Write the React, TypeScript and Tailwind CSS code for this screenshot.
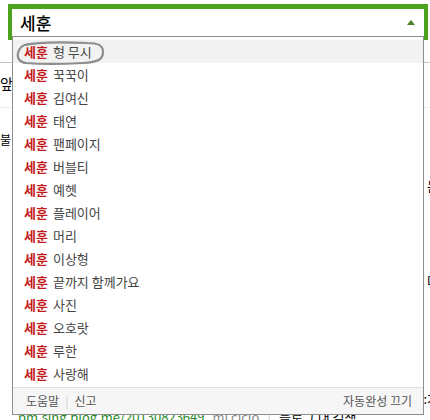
const SUGGESTIONS = [
  "형 무시",
  "꾹꾹이",
  "김여신",
  "태연",
  "팬페이지",
  "버블티",
  "예헷",
  "플레이어",
  "머리",
  "이상형",
  "끝까지 함께가요",
  "사진",
  "오호랏",
  "루한",
  "사랑해",
];

function Scribble() {
  // hand-drawn gray loop around the first suggestion
  return (
    <svg
      className="pointer-events-none absolute left-[2px] top-[4px]"
      width="94"
      height="26"
      viewBox="0 0 94 26"
    >
      <path
        d="M10 4 C22 1 48 1 72 2 C83 2 88 4 88 11 C88 18 84 21 68 22 C48 23 24 23 11 22 C4 21 2 17 3 12 C4 7 7 4 13 3"
        fill="none"
        stroke="#8d8d8d"
        strokeWidth="2.2"
        strokeLinecap="round"
      />
    </svg>
  );
}

export default function App() {
  return (
    <div className="relative h-[420px] w-[430px] overflow-hidden bg-white font-['Noto_Sans_CJK_KR','Noto_Sans',sans-serif] text-[13px] text-[#333]">
      {/* search box */}
      <div className="ml-[8px] mt-[4px] flex h-[36px] w-[420px] items-center justify-between border-x-[4px] border-b-[4px] border-t-[5px] border-[#4ba31d] bg-white pl-[8px] pr-[9px]">
        <span className="text-[17px] font-medium leading-none text-black">세훈</span>
        <svg width="8" height="5" viewBox="0 0 8 5">
          <path d="M0 5 L4 0 L8 5 Z" fill="#4d7d24" />
        </svg>
      </div>

      {/* page behind the dropdown */}
      <div className="mt-[22px] border-t border-[#c4c4c4]" />
      <div className="flex h-[45px] items-start justify-between border-b border-[#ececec] pt-[12px]">
        <span className="text-[14px] leading-4 text-black">앞</span>
      </div>
      <div className="flex h-[40px] items-end justify-between">
        <span className="text-[12px] leading-4 text-black">불</span>
      </div>
      <div className="flex h-[46px] items-end justify-end">
        <span className="mr-[-9px] text-[13px] leading-4 text-black">는</span>
      </div>
      <div className="flex h-[95px] items-end justify-end">
        <span className="mr-[-9px] text-[13px] leading-4 text-black">다</span>
      </div>
      <div className="flex h-[118px] items-end justify-end">
        <span className="mr-[-9px] text-[13px] leading-4 text-black">:가</span>
      </div>
      <div className="flex items-start gap-[8px] pl-[18px] pt-[2px] text-[13px] leading-4">
        <span className="text-[#1f8a1f]">pm.sing.blog.me/20130823649</span>
        <span className="text-[#888]">mi ciclo</span>
        <span className="text-[#ccc]">|</span>
        <span className="text-black">블로그 내 검색</span>
      </div>

      {/* autocomplete layer */}
      <div className="absolute left-[12px] top-[36px] flex h-[379px] w-[412px] flex-col border border-[#8e8e8e] bg-white">
        <ul className="relative flex-1 pt-[3px]">
          {SUGGESTIONS.map((s, i) => (
            <li
              key={s}
              className={
                "flex h-[23px] items-center pl-[11px] leading-none " +
                (i === 0 ? "bg-[#f2f2f2]" : "")
              }
            >
              <b className="font-bold text-[#c41a1a]">세훈</b>
              <span className="ml-[5px] text-[#444]">{s}</span>
            </li>
          ))}
          <Scribble />
        </ul>
        <div className="flex h-[27px] items-center justify-between border-t border-[#dedede] bg-[#f6f6f6] pl-[13px] pr-[11px] text-[12px] text-[#555]">
          <div className="flex items-center gap-[6px]">
            <span>도움말</span>
            <span className="text-[#d0d0d0]">|</span>
            <span>신고</span>
          </div>
          <span>자동완성 끄기</span>
        </div>
      </div>
    </div>
  );
}
